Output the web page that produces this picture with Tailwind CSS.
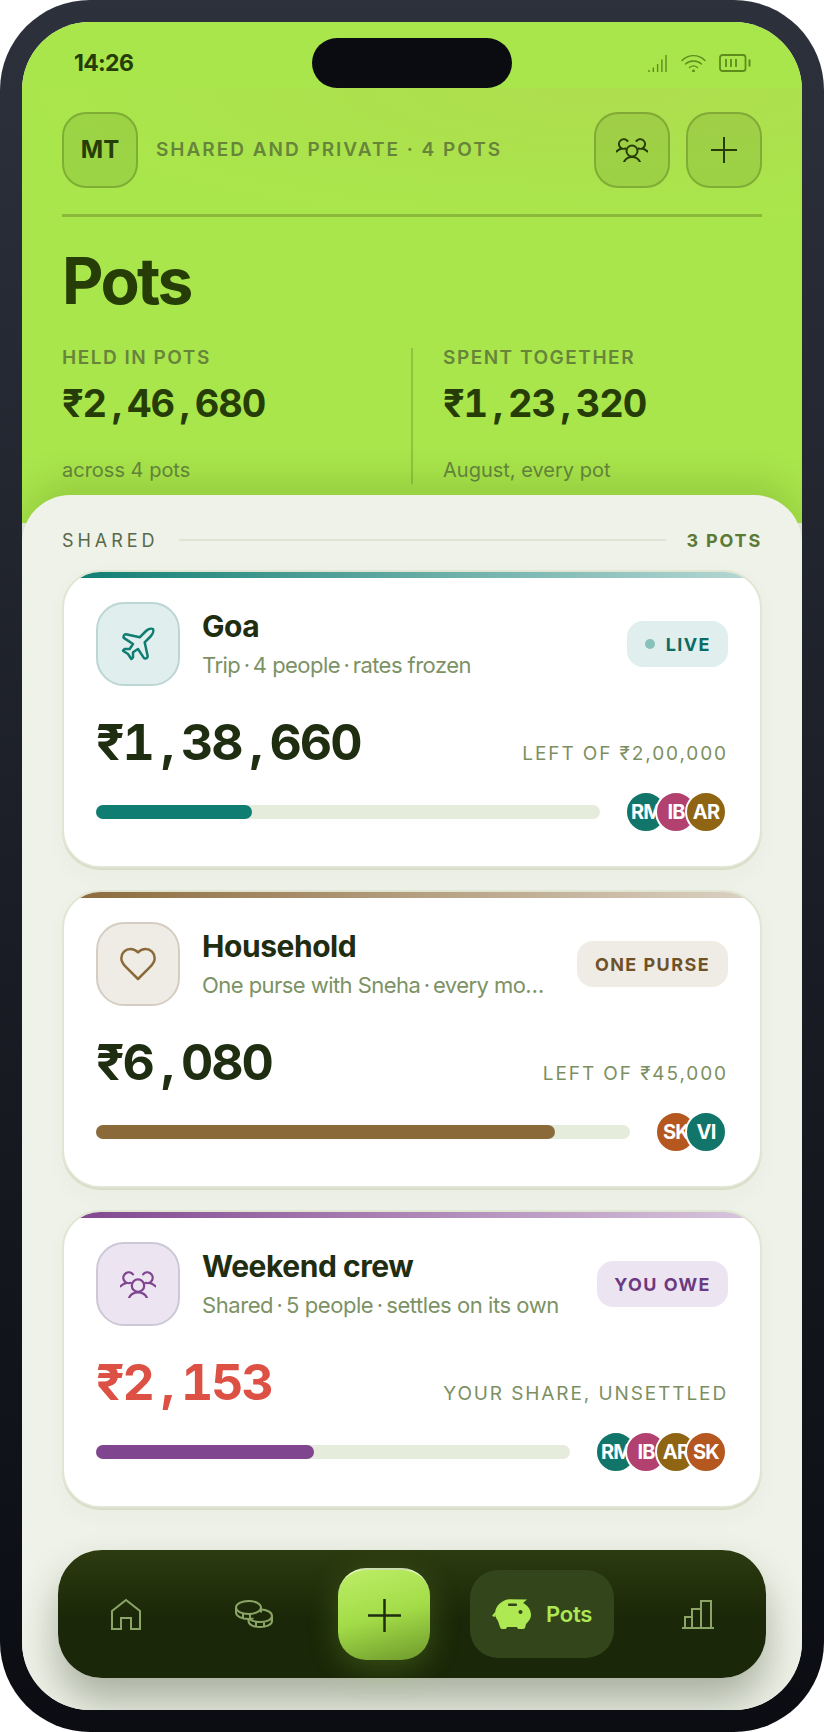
<!DOCTYPE html>
<html lang="en">
<head>
    <meta charset="UTF-8">
    <title>Pots</title>
    <script src="https://cdn.jsdelivr.net/npm/@tailwindcss/browser@4"></script>
</head>
<body class="bg-white font-['Inter',sans-serif]">

<!-- Phone frame -->
<div class="w-[824px] h-[1732px] p-[22px] rounded-[90px] bg-linear-to-b from-[#2d313c] to-[#0b0d13]">
    <div class="relative w-[780px] h-[1688px] rounded-[68px] overflow-hidden bg-[#eff2e8]">

        <!-- Green header -->
        <div class="relative h-[501px] bg-[#a9e64b] text-[#263d08]">
            <div class="absolute left-0 right-0 top-[66px] h-[140px] bg-[radial-gradient(ellipse_at_75%_0%,rgba(185,205,85,0.35),rgba(169,230,75,0)_70%)]"></div>
            <div class="absolute left-[290px] top-[16px] w-[200px] h-[50px] rounded-[25px] bg-[#0a0c12]"></div>

            <!-- Status bar -->
            <div class="relative h-[66px] flex items-center justify-between pt-[16px] pl-[52px] pr-[51px]">
                <span class="text-[23px] font-bold tracking-[-0.03em] leading-none">14:26</span>
                <div class="flex items-center gap-[13px]">
                    <svg width="20" height="19" viewBox="0 0 20 19" fill="none" stroke="#5d8c1c" stroke-width="1.4">
                        <path d="M1 18v-2M5.300 18v-4.500M9.600 18v-8M13.900 18v-12.500M18 18v-17"/>
                    </svg>
                    <svg width="25" height="18" viewBox="0 0 25 18" fill="none" stroke="#5d8c1c" stroke-width="1.4" stroke-linecap="round">
                        <path d="M1 6.500C7.500 0 17.500 0 24 6.500M4.500 10C9 6 16 6 20.500 10M8.500 13.500C11 11.500 14 11.500 16.500 13.500"/>
                        <circle cx="12.500" cy="17" r="0.700" fill="#5d8c1c"/>
                    </svg>
                    <svg width="32" height="18" viewBox="0 0 32 18" fill="none" stroke="#5d8c1c">
                        <rect x="1" y="1" width="25.500" height="16" rx="2.500" stroke-width="1.800"/>
                        <path d="M7 5v8M12 5v8M17 5v8" stroke-width="1.800"/>
                        <path d="M30.500 5.500v7" stroke-width="2"/>
                    </svg>
                </div>
            </div>

            <!-- Top row -->
            <div class="relative flex items-center mt-[24px] mx-[40px] h-[76px]">
                <div class="w-[76px] h-[76px] rounded-[24px] bg-[#263d08]/10 border-2 border-[#263d08]/25 flex items-center justify-center text-[24px] font-bold">MT</div>
                <span class="ml-[18px] mt-[1px] text-[19px] font-semibold tracking-[0.105em] text-[#67853a]">SHARED AND PRIVATE · 4 POTS</span>
                <div class="ml-auto flex gap-[16px]">
                    <div class="w-[76px] h-[76px] rounded-[24px] bg-[#263d08]/10 border-2 border-[#263d08]/25 flex items-center justify-center">
                        <svg width="32" height="24" viewBox="0 0 32 24" fill="none" stroke="#263d08" stroke-width="2" stroke-linecap="round">
                            <circle cx="16" cy="13" r="5.500"/>
                            <path d="M8 24c1.500-3.500 4.500-5 8-5s6.500 1.500 8 5"/>
                            <path d="M9.500 10.500A4.800 4.800 0 1 1 11.500 3M.5 13.500c1.500-1.500 3-2.500 5.500-3"/>
                            <path d="M22.500 10.500A4.800 4.800 0 1 0 20.500 3M31.500 13.500c-1.500-1.500-3-2.500-5.500-3"/>
                        </svg>
                    </div>
                    <div class="w-[76px] h-[76px] rounded-[24px] bg-[#263d08]/10 border-2 border-[#263d08]/25 flex items-center justify-center">
                        <svg width="26" height="26" viewBox="0 0 26 26" fill="none" stroke="#263d08" stroke-width="2"><path d="M13 0v26M0 13h26"/></svg>
                    </div>
                </div>
            </div>

            <div class="relative mx-[40px] mt-[26px] h-[3px] bg-[#8bb93a]"></div>

            <h1 class="relative mx-[40px] mt-[28px] text-[64px] leading-[72px] font-bold tracking-[-0.04em]">Pots</h1>

            <!-- Stats -->
            <div class="relative flex mx-[40px] mt-[31px] h-[136px]">
                <div class="w-[351px] border-r-2 border-[#263d08]/20">
                    <div class="text-[19px] leading-[20px] font-semibold tracking-[0.08em] text-[#67853a]">HELD IN POTS</div>
                    <div class="mt-[11px] text-[38px] leading-[48px] font-bold tabular-nums tracking-[-0.03em]">₹2<span class="inline-block w-[21px] text-center">,</span>46<span class="inline-block w-[21px] text-center">,</span>680</div>
                    <div class="mt-[29px] text-[20px] leading-[28px] text-[#66863d]">across 4 pots</div>
                </div>
                <div class="pl-[30px]">
                    <div class="text-[19px] leading-[20px] font-semibold tracking-[0.08em] text-[#67853a]">SPENT TOGETHER</div>
                    <div class="mt-[11px] text-[38px] leading-[48px] font-bold tabular-nums tracking-[-0.03em]">₹1<span class="inline-block w-[21px] text-center">,</span>23<span class="inline-block w-[21px] text-center">,</span>320</div>
                    <div class="mt-[29px] text-[20px] leading-[28px] text-[#66863d]">August, every pot</div>
                </div>
            </div>
        </div>

        <!-- Sheet -->
        <div class="relative h-[1215px] -mt-[28px] rounded-t-[48px] bg-[#eff2e8] px-[40px] pt-[33px] shadow-[0_-14px_36px_rgba(38,61,8,0.16)]">
            <div class="flex items-center h-[24px]">
                <span class="text-[18px] tracking-[0.22em] text-[#57694a]">SHARED</span>
                <div class="flex-1 h-[2px] ml-[20px] mr-[21px] bg-[#e0e4d4]"></div>
                <span class="text-[18px] font-bold tracking-[0.1em] text-[#5c7a35]">3 POTS</span>
            </div>

            <div class="mt-[18px] flex flex-col gap-[22px]">

                <!-- Goa -->
                <div class="h-[298px] rounded-[38px] border-2 border-[#e1e6d4] bg-white overflow-hidden shadow-[0_2px_0_#d8dcc8,0_8px_24px_rgba(38,61,8,0.03)]">
                    <div class="h-[6px] bg-linear-to-r from-[#0f7d72] to-[#0f7d72]/30"></div>
                    <div class="px-[32px] pt-[24px]">
                        <div class="flex items-center">
                            <div class="w-[84px] h-[84px] shrink-0 rounded-[28px] bg-[#e0eeed] border-2 border-[#bcd6d3] flex items-center justify-center">
                                <svg width="40" height="40" viewBox="0 0 24 24" fill="none" stroke="#0f7d72" stroke-width="1.500" stroke-linejoin="round">
                                    <path d="M17.800 19.200 16 11l3.500-3.500C21 6 21.500 4 21 3c-1-.5-3 0-4.500 1.500L13 8 4.800 6.200c-.5-.1-.9.1-1.100.5l-.3.5c-.2.5-.1 1 .3 1.300L9 12l-2 3H4l-1 1 3 2 2 3 1-1v-3l3-2 3.500 5.300c.3.4.8.5 1.300.3l.5-.2c.4-.3.6-.7.5-1.200z"/>
                                </svg>
                            </div>
                            <div class="ml-[22px] flex-1 min-w-0">
                                <div class="text-[30px] leading-[38px] font-bold tracking-[-0.015em] text-[#1f2d10]">Goa</div>
                                <div class="mt-[4px] whitespace-nowrap text-[22px] leading-[32px] tracking-[-0.025em] text-[#7c9264]">Trip&thinsp;·&thinsp;4 people&thinsp;·&thinsp;rates frozen</div>
                            </div>
                            <div class="ml-[24px] h-[46px] pl-[18px] pr-[17px] rounded-[16px] bg-[#e0eeed] flex items-center gap-[11px] text-[18px] font-bold tracking-[0.08em] text-[#0c6b62]">
                                <span class="w-[10px] h-[10px] rounded-full bg-[#87c1ba]"></span>LIVE
                            </div>
                        </div>
                        <div class="mt-[26px] flex items-baseline justify-between">
                            <span class="text-[50px] leading-[60px] font-bold tabular-nums tracking-[-2px] text-[#1f2d10]">₹1<span class="inline-block w-[28px] text-center">,</span>38<span class="inline-block w-[28px] text-center">,</span>660</span>
                            <span class="text-[19px] tracking-[0.1em] text-[#7c8f63]">LEFT OF ₹2,00,000</span>
                        </div>
                        <div class="mt-[19px] flex items-center gap-[25px]">
                            <div class="flex-1 h-[14px] rounded-[7px] bg-[#e6ecdc]">
                                <div class="h-full w-[31%] rounded-[7px] bg-[#0f7d72]"></div>
                            </div>
                            <div class="flex mr-[1px]">
                                <div class="relative w-[42px] h-[42px] rounded-full border-2 border-white bg-[#12756a] flex items-center justify-center text-[20px] font-bold tracking-[-0.04em] text-white">RM</div>
                                <div class="relative -ml-[12px] w-[42px] h-[42px] rounded-full border-2 border-white bg-[#b34170] flex items-center justify-center text-[20px] font-bold tracking-[-0.04em] text-white">IB</div>
                                <div class="relative -ml-[12px] w-[42px] h-[42px] rounded-full border-2 border-white bg-[#8f6413] flex items-center justify-center text-[20px] font-bold tracking-[-0.04em] text-white">AR</div>
                            </div>
                        </div>
                    </div>
                </div>

                <!-- Household -->
                <div class="h-[298px] rounded-[38px] border-2 border-[#e1e6d4] bg-white overflow-hidden shadow-[0_2px_0_#d8dcc8,0_8px_24px_rgba(38,61,8,0.03)]">
                    <div class="h-[6px] bg-linear-to-r from-[#8b6a3a] to-[#8b6a3a]/30"></div>
                    <div class="px-[32px] pt-[24px]">
                        <div class="flex items-center">
                            <div class="w-[84px] h-[84px] shrink-0 rounded-[28px] bg-[#efece6] border-2 border-[#d5cdc2] flex items-center justify-center">
                                <svg width="40" height="40" viewBox="0 0 24 24" fill="none" stroke="#8b6a3a" stroke-width="1.500" stroke-linejoin="round">
                                    <path d="M19 14c1.490-1.460 3-3.210 3-5.500A5.500 5.500 0 0 0 16.500 3c-1.760 0-3 .5-4.500 2-1.500-1.500-2.740-2-4.500-2A5.500 5.500 0 0 0 2 8.500c0 2.300 1.500 4.050 3 5.500l7 7Z"/>
                                </svg>
                            </div>
                            <div class="ml-[22px] flex-1 min-w-0">
                                <div class="text-[30px] leading-[38px] font-bold tracking-[-0.015em] text-[#1f2d10]">Household</div>
                                <div class="mt-[4px] whitespace-nowrap text-[22px] leading-[32px] tracking-[-0.025em] text-[#7c9264]">One purse with Sneha&thinsp;·&thinsp;every mo…</div>
                            </div>
                            <div class="ml-[24px] h-[46px] px-[18px] rounded-[16px] bg-[#efece6] flex items-center text-[18px] font-bold tracking-[0.08em] text-[#6f5228]">ONE PURSE</div>
                        </div>
                        <div class="mt-[26px] flex items-baseline justify-between">
                            <span class="text-[50px] leading-[60px] font-bold tabular-nums tracking-[-2px] text-[#1f2d10]">₹6<span class="inline-block w-[28px] text-center">,</span>080</span>
                            <span class="text-[19px] tracking-[0.1em] text-[#7c8f63]">LEFT OF ₹45,000</span>
                        </div>
                        <div class="mt-[19px] flex items-center gap-[25px]">
                            <div class="flex-1 h-[14px] rounded-[7px] bg-[#e6ecdc]">
                                <div class="h-full w-[86%] rounded-[7px] bg-[#8b6a3a]"></div>
                            </div>
                            <div class="flex mr-[1px]">
                                <div class="relative w-[42px] h-[42px] rounded-full border-2 border-white bg-[#b5581f] flex items-center justify-center text-[20px] font-bold tracking-[-0.04em] text-white">SK</div>
                                <div class="relative -ml-[12px] w-[42px] h-[42px] rounded-full border-2 border-white bg-[#12756a] flex items-center justify-center text-[20px] font-bold tracking-[-0.04em] text-white">VI</div>
                            </div>
                        </div>
                    </div>
                </div>

                <!-- Weekend crew -->
                <div class="h-[298px] rounded-[38px] border-2 border-[#e1e6d4] bg-white overflow-hidden shadow-[0_2px_0_#d8dcc8,0_8px_24px_rgba(38,61,8,0.03)]">
                    <div class="h-[6px] bg-linear-to-r from-[#80458f] to-[#80458f]/30"></div>
                    <div class="px-[32px] pt-[24px]">
                        <div class="flex items-center">
                            <div class="w-[84px] h-[84px] shrink-0 rounded-[28px] bg-[#ece5f1] border-2 border-[#cdc8d8] flex items-center justify-center">
                                <svg width="36" height="27" viewBox="0 0 32 24" fill="none" stroke="#80458f" stroke-width="2" stroke-linecap="round">
                                    <circle cx="16" cy="13" r="5.500"/>
                                    <path d="M8 24c1.500-3.500 4.500-5 8-5s6.500 1.500 8 5"/>
                                    <path d="M9.500 10.500A4.800 4.800 0 1 1 11.500 3M.5 13.500c1.500-1.500 3-2.500 5.500-3"/>
                                    <path d="M22.500 10.500A4.800 4.800 0 1 0 20.500 3M31.500 13.500c-1.500-1.500-3-2.500-5.500-3"/>
                                </svg>
                            </div>
                            <div class="ml-[22px] flex-1 min-w-0">
                                <div class="text-[30px] leading-[38px] font-bold tracking-[-0.015em] text-[#1f2d10]">Weekend crew</div>
                                <div class="mt-[4px] whitespace-nowrap text-[22px] leading-[32px] tracking-[-0.02em] text-[#7c9264]">Shared&thinsp;·&thinsp;5 people&thinsp;·&thinsp;settles on its own</div>
                            </div>
                            <div class="ml-[24px] h-[46px] px-[17px] rounded-[16px] bg-[#ece5f1] flex items-center text-[18px] font-bold tracking-[0.08em] text-[#6c3a80]">YOU OWE</div>
                        </div>
                        <div class="mt-[26px] flex items-baseline justify-between">
                            <span class="text-[50px] leading-[60px] font-bold tabular-nums tracking-[-2px] text-[#dd5145]">₹2<span class="inline-block w-[28px] text-center">,</span>153</span>
                            <span class="text-[19px] tracking-[0.1em] text-[#7c8f63]">YOUR SHARE, UNSETTLED</span>
                        </div>
                        <div class="mt-[19px] flex items-center gap-[25px]">
                            <div class="flex-1 h-[14px] rounded-[7px] bg-[#e6ecdc]">
                                <div class="h-full w-[46%] rounded-[7px] bg-[#80458f]"></div>
                            </div>
                            <div class="flex mr-[1px]">
                                <div class="relative w-[42px] h-[42px] rounded-full border-2 border-white bg-[#12756a] flex items-center justify-center text-[20px] font-bold tracking-[-0.04em] text-white">RM</div>
                                <div class="relative -ml-[12px] w-[42px] h-[42px] rounded-full border-2 border-white bg-[#b34170] flex items-center justify-center text-[20px] font-bold tracking-[-0.04em] text-white">IB</div>
                                <div class="relative -ml-[12px] w-[42px] h-[42px] rounded-full border-2 border-white bg-[#8f6413] flex items-center justify-center text-[20px] font-bold tracking-[-0.04em] text-white">AR</div>
                                <div class="relative -ml-[12px] w-[42px] h-[42px] rounded-full border-2 border-white bg-[#b5581f] flex items-center justify-center text-[20px] font-bold tracking-[-0.04em] text-white">SK</div>
                            </div>
                        </div>
                    </div>
                </div>
            </div>
        </div>

        <!-- Bottom nav -->
        <div class="absolute left-[36px] bottom-[32px] w-[708px] h-[128px] px-[16px] rounded-[44px] bg-linear-to-b from-[#2c3b10] to-[#1a2708] to-[55%] flex items-center shadow-[0_24px_40px_rgba(26,39,8,0.32)]">
            <div class="w-[104px] flex justify-center">
                <svg width="32" height="33" viewBox="0 0 32 33" fill="none" stroke="#8aa565" stroke-width="2">
                    <path d="M2 31V13L16 2l14 11v18H21V20H11v11Z"/>
                </svg>
            </div>
            <div class="ml-[24px] w-[104px] flex justify-center">
                <svg width="38" height="28" viewBox="0 0 38 28" fill="none" stroke="#8aa565" stroke-width="2">
                    <ellipse cx="13.500" cy="7.500" rx="12.500" ry="6.500"/>
                    <path d="M1 7.500v5c0 3.500 5.500 6.500 12.500 6.500 2 0 3.500-.2 5-.6M26 7.500v5M8 13v5.500M15 14v5"/>
                    <path d="M27 9.500c5.500.5 10 3 10 6.500v5c0 3.500-5.500 6-12 6s-11.500-2.500-11.500-6v-2M37 16c0 3.500-5 6-12 6-4 0-7.500-.8-10-2.300M21 22v5M29 22v5"/>
                </svg>
            </div>
            <div class="ml-[32px] w-[92px] h-[92px] rounded-[28px] border-t-2 border-white/60 bg-linear-165 from-[#bdee66] via-[#a3dc48] to-[#6f9a2c] flex items-center justify-center shadow-[0_8px_32px_rgba(169,230,75,0.22)]">
                <svg width="33" height="33" viewBox="0 0 33 33" fill="none" stroke="#1f2d10" stroke-width="2.500"><path d="M16.500 0v33M0 16.500h33"/></svg>
            </div>
            <div class="ml-[40px] w-[144px] h-[88px] rounded-[28px] bg-[#33451a] flex items-center justify-center gap-[14px]">
                <svg width="40" height="30" viewBox="0 0 40 30" fill="#aee852">
                    <path d="M3 15C3 7 10 .5 18 .3L35 .5l-4 3.500c4 2 8 6 8 12 0 4-3 7-5 9l-1 4q-1 1-2 1h-4q-2 0-2-2H15q0 2-2 2h-3q-1.500 0-2-2l-2-6c-1.500-2-3-5-3-7Z"/>
                    <path d="M0 17l3-4v5Z"/>
                    <rect x="16" y="4.500" width="9" height="2.500" rx="1" fill="#33451a"/>
                    <circle cx="28.500" cy="13" r="2" fill="#33451a"/>
                </svg>
                <span class="text-[22px] font-semibold tracking-[-0.01em] text-[#aee852]">Pots</span>
            </div>
            <div class="ml-[32px] w-[104px] flex justify-center">
                <svg width="32" height="29" viewBox="0 0 32 29" fill="none" stroke="#8aa565" stroke-width="2">
                    <path d="M0 28h32M3 28V17h7v11M10 28V9h9v19M19 28V1h10v27"/>
                </svg>
            </div>
        </div>
    </div>
</div>

</body>
</html>
